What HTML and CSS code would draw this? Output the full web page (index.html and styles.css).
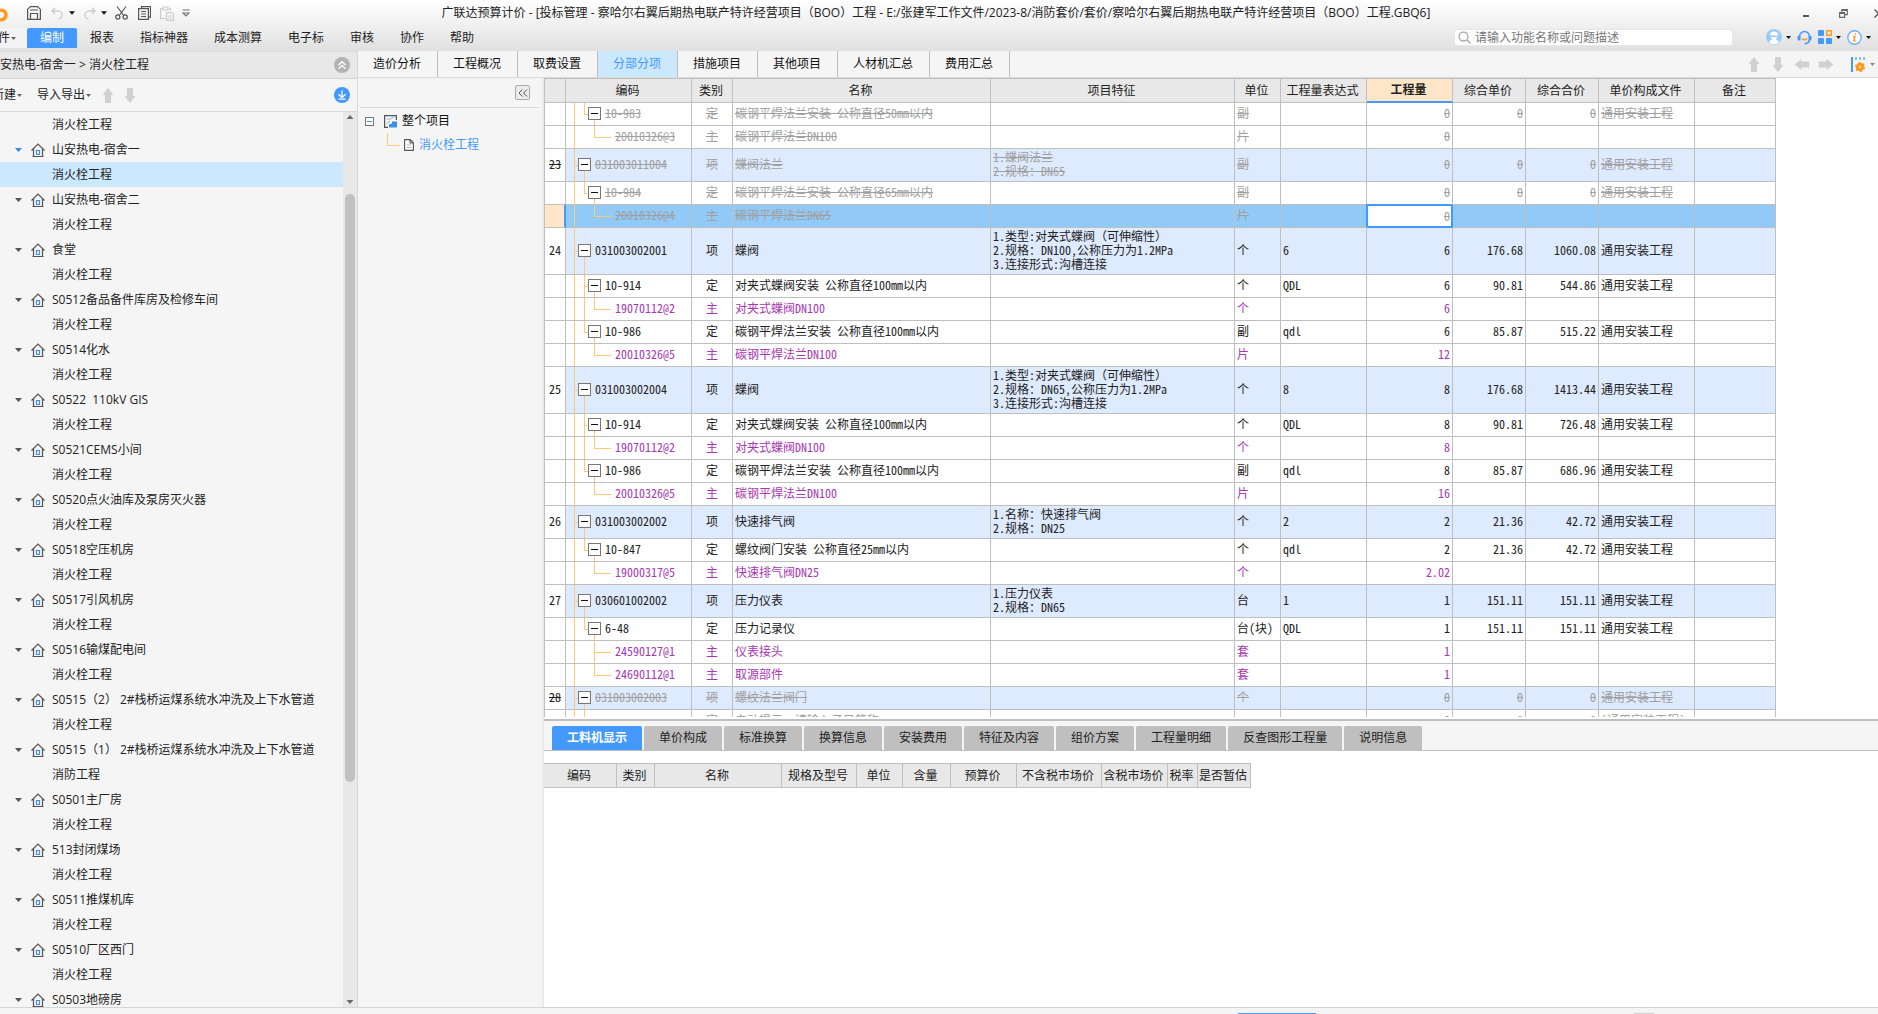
FILE: index.html
```
<!DOCTYPE html>
<html lang="zh-CN">
<head>
<meta charset="utf-8">
<title>广联达预算计价</title>
<link rel="stylesheet" href="styles.css">
</head>
<body>
<svg class="defs" aria-hidden="true">
  <symbol id="house" viewBox="0 0 14 14"><path d="M.5 7.5 7 1l6.500 6.500M2.500 6v7.500M11.500 6v7.500M1.500 13.500h11" fill="none" stroke="#555" stroke-width="1.200"/><path d="M5.500 7.500h3v4h-3z" fill="none" stroke="#3c8ee8" stroke-width="1.200"/></symbol>
  <symbol id="caret" viewBox="0 0 7 4"><path d="M0 0h7L3.500 4z" fill="currentColor"/></symbol>
  <symbol id="arrow" viewBox="0 0 12 15"><path d="M6 0l5.500 7H9v8H3V7H.5z" fill="currentColor"/></symbol>
</svg>

<header class="top">
  <div class="titlebar">
    <div class="quick">
      <svg class="logo" width="10" height="16" viewBox="0 0 10 16"><path d="M0 3.500a4.700 4.700 0 1 1 0 9" fill="none" stroke="#ff9a1f" stroke-width="3.500"/></svg>
      <button class="ib save" aria-label="保存"><svg width="14" height="14" viewBox="0 0 14 14"><path d="M.6 3.400 3.400.6h7.200l2.800 2.800v10H.6zM3 4h8M3.500 13V7.500h7V13" fill="none" stroke="#555" stroke-width="1.200"/></svg></button>
      <button class="ib undo" aria-label="撤销"><svg width="12" height="13" viewBox="0 0 12 13"><path d="M4 .8 1 4l3 3M1 4h5.500a4 4 0 0 1 1 8" fill="none" stroke="#ccc" stroke-width="1.300"/></svg></button>
      <svg class="car" width="6" height="4"><use href="#caret"/></svg>
      <button class="ib redo" aria-label="恢复"><svg width="12" height="13" viewBox="0 0 12 13"><path d="M8 .8 11 4 8 7M11 4H5.500a4 4 0 0 0-1 8" fill="none" stroke="#ccc" stroke-width="1.300"/></svg></button>
      <svg class="car" width="6" height="4"><use href="#caret"/></svg>
      <button class="ib cut" aria-label="剪切"><svg width="13" height="14" viewBox="0 0 13 14"><path d="M2 .5l6.800 9M11 .5l-6.800 9" fill="none" stroke="#555" stroke-width="1.200"/><circle cx="2.800" cy="11" r="2.100" fill="none" stroke="#555" stroke-width="1.200"/><circle cx="10.200" cy="11" r="2.100" fill="none" stroke="#555" stroke-width="1.200"/></svg></button>
      <button class="ib copy" aria-label="复制"><svg width="13" height="14" viewBox="0 0 13 14"><path d="M3.500 2.500V.6h9v10.500h-2M.6 2.600h9.800v10.800H.6zM3 5.500h5M3 8h5M3 10.500h5" fill="none" stroke="#555" stroke-width="1.200"/></svg></button>
      <button class="ib paste" aria-label="粘贴"><svg width="14" height="15" viewBox="0 0 14 15"><path d="M7 12.500H.6v-10H3M9 2.500h1.500V5M3 1h5v3H3zM6.600 6.600h5l1.800 1.800v6H6.600zM8.500 10h3M8.500 12h3" fill="none" stroke="#ccc" stroke-width="1.200"/></svg></button>
      <button class="ib more" aria-label="自定义"><svg width="8" height="8" viewBox="0 0 8 8"><path d="M.5 1h7M1 4l3 3 3-3z" fill="none" stroke="#777" stroke-width="1.200"/></svg></button>
    </div>
    <h1>广联达预算计价 - [投标管理 - 察哈尔右翼后期热电联产特许经营项目（BOO）工程 - E:/张建军工作文件/2023-8/消防套价/套价/察哈尔右翼后期热电联产特许经营项目（BOO）工程.GBQ6]</h1>
    <div class="winctl">
      <button class="ib" aria-label="最小化"><svg width="12" height="12" viewBox="0 0 12 12"><path d="M2 9h6" stroke="#555" stroke-width="2"/></svg></button>
      <button class="ib" aria-label="还原"><svg width="9" height="9" viewBox="0 0 9 9"><path d="M.6 3.600h5v4.800h-5zM2.800 3.500V.6h5.500v5H6M.6 4.500h5M3 1.500h5" fill="none" stroke="#666" stroke-width="1.100"/></svg></button>
      <button class="ib close" aria-label="关闭"><svg width="9" height="9" viewBox="0 0 9 9"><path d="M.5.5l8 8M8.500.5l-8 8" stroke="#555" stroke-width="1.300"/></svg></button>
    </div>
  </div>
  <div class="menubar">
    <nav>
      <button class="file">文件<svg width="5" height="3"><use href="#caret"/></svg></button>
      <button class="on">编制</button><button>报表</button><button>指标神器</button><button>成本测算</button><button>电子标</button><button>审核</button><button>协作</button><button>帮助</button>
    </nav>
    <label class="search">
      <svg width="13" height="13" viewBox="0 0 13 13"><circle cx="5.500" cy="5.500" r="4.500" fill="none" stroke="#aaa" stroke-width="1.300"/><path d="M9 9l3.500 3.500" stroke="#aaa" stroke-width="1.500"/></svg>
      <input type="text" placeholder="请输入功能名称或问题描述" aria-label="搜索功能">
    </label>
    <div class="account">
      <button class="ib" aria-label="用户"><svg width="16" height="16" viewBox="0 0 16 16"><circle cx="8" cy="8" r="8" fill="#9ccbf8"/><path d="M4 6.500a4 4 0 0 1 8 0zM5 8h6a3 3 0 0 1-1.500 2.600c2 .5 3 1.500 3.500 2.900a8 8 0 0 1-10 0c.5-1.400 1.500-2.400 3.500-2.900A3 3 0 0 1 5 8z" fill="#fff"/></svg></button>
      <svg class="car" width="5" height="3"><use href="#caret"/></svg>
      <button class="ib" aria-label="客服"><svg width="15" height="15" viewBox="0 0 15 15"><path d="M2.500 7V6.500a5 5 0 0 1 10 0V7M12.500 9.500c0 2.500-2 4-5 4.300" fill="none" stroke="#49f" stroke-width="1.600"/><path d="M.5 6h3v4.500H2A1.500 1.500 0 0 1 .5 9zM11.500 6h3V9a1.500 1.500 0 0 1-1.500 1.500h-1.500z" fill="#49f"/><path d="M5 8.500q2.500 2.500 5 0" fill="none" stroke="#ff9a1f" stroke-width="1.500"/></svg></button>
      <button class="ib" aria-label="应用"><svg width="14" height="14" viewBox="0 0 14 14"><rect width="6" height="6" rx="1" fill="#49f"/><rect y="8" width="6" height="6" rx="1" fill="#49f"/><rect x="8" y="8" width="6" height="6" rx="1" fill="#49f"/><path d="M8.800.8h4.400v4.400H8.800z" fill="none" stroke="#ff9a1f" stroke-width="1.500"/></svg></button>
      <svg class="car" width="5" height="3"><use href="#caret"/></svg>
      <button class="ib" aria-label="关于"><svg width="15" height="15" viewBox="0 0 15 15"><circle cx="7.500" cy="7.500" r="6.700" fill="#fff" stroke="#6fb1fb" stroke-width="1.400"/><path d="M8.500 3.200v1.600M6 6.500h1.800L7 11h1.500" fill="none" stroke="#ff9a1f" stroke-width="1.500"/></svg></button>
      <svg class="car" width="5" height="3"><use href="#caret"/></svg>
    </div>
  </div>
</header>

<div class="body">
  <aside class="projects">
    <div class="crumb"><span class="path">山安热电-宿舍一 &gt; 消火栓工程</span>
      <button class="ib" aria-label="收起"><svg width="16" height="16" viewBox="0 0 16 16"><circle cx="8" cy="8" r="8" fill="#b3b3b3"/><path d="M4.500 8 8 4.700 11.500 8M4.500 11.700 8 8.400l3.500 3.300" fill="none" stroke="#fff" stroke-width="1.300"/></svg></button></div>
    <div class="tools">
      <button class="txt new">新建<svg width="5" height="3"><use href="#caret"/></svg></button>
      <button class="txt imp">导入导出<svg width="5" height="3"><use href="#caret"/></svg></button>
      <button class="ib dim" aria-label="上移"><svg width="12" height="15"><use href="#arrow"/></svg></button>
      <button class="ib dim down" aria-label="下移"><svg width="12" height="15"><use href="#arrow"/></svg></button>
      <button class="ib dl" aria-label="下载"><svg width="16" height="16" viewBox="0 0 16 16"><circle cx="8" cy="8" r="8" fill="#49f"/><path d="M8 3.500v7M4.500 7.200 8 10.600l3.500-3.400M4.500 12.200h7" fill="none" stroke="#fff" stroke-width="1.300"/></svg></button>
    </div>
    <div class="treewrap">
      <ul class="tree">
        <li class="leaf">消火栓工程</li>
        <li class="cur"><svg class="tw" width="7" height="4"><use href="#caret"/></svg><svg class="hs" width="14" height="14"><use href="#house"/></svg>山安热电-宿舍一</li>
        <li class="leaf sel">消火栓工程</li>
        <li><svg class="tw" width="7" height="4"><use href="#caret"/></svg><svg class="hs" width="14" height="14"><use href="#house"/></svg>山安热电-宿舍二</li>
        <li class="leaf">消火栓工程</li>
        <li><svg class="tw" width="7" height="4"><use href="#caret"/></svg><svg class="hs" width="14" height="14"><use href="#house"/></svg>食堂</li>
        <li class="leaf">消火栓工程</li>
        <li><svg class="tw" width="7" height="4"><use href="#caret"/></svg><svg class="hs" width="14" height="14"><use href="#house"/></svg>S0512备品备件库房及检修车间</li>
        <li class="leaf">消火栓工程</li>
        <li><svg class="tw" width="7" height="4"><use href="#caret"/></svg><svg class="hs" width="14" height="14"><use href="#house"/></svg>S0514化水</li>
        <li class="leaf">消火栓工程</li>
        <li><svg class="tw" width="7" height="4"><use href="#caret"/></svg><svg class="hs" width="14" height="14"><use href="#house"/></svg>S0522&nbsp; 110kV GIS</li>
        <li class="leaf">消火栓工程</li>
        <li><svg class="tw" width="7" height="4"><use href="#caret"/></svg><svg class="hs" width="14" height="14"><use href="#house"/></svg>S0521CEMS小间</li>
        <li class="leaf">消火栓工程</li>
        <li><svg class="tw" width="7" height="4"><use href="#caret"/></svg><svg class="hs" width="14" height="14"><use href="#house"/></svg>S0520点火油库及泵房灭火器</li>
        <li class="leaf">消火栓工程</li>
        <li><svg class="tw" width="7" height="4"><use href="#caret"/></svg><svg class="hs" width="14" height="14"><use href="#house"/></svg>S0518空压机房</li>
        <li class="leaf">消火栓工程</li>
        <li><svg class="tw" width="7" height="4"><use href="#caret"/></svg><svg class="hs" width="14" height="14"><use href="#house"/></svg>S0517引风机房</li>
        <li class="leaf">消火栓工程</li>
        <li><svg class="tw" width="7" height="4"><use href="#caret"/></svg><svg class="hs" width="14" height="14"><use href="#house"/></svg>S0516输煤配电间</li>
        <li class="leaf">消火栓工程</li>
        <li><svg class="tw" width="7" height="4"><use href="#caret"/></svg><svg class="hs" width="14" height="14"><use href="#house"/></svg>S0515（2） 2#栈桥运煤系统水冲洗及上下水管道</li>
        <li class="leaf">消火栓工程</li>
        <li><svg class="tw" width="7" height="4"><use href="#caret"/></svg><svg class="hs" width="14" height="14"><use href="#house"/></svg>S0515（1） 2#栈桥运煤系统水冲洗及上下水管道</li>
        <li class="leaf">消防工程</li>
        <li><svg class="tw" width="7" height="4"><use href="#caret"/></svg><svg class="hs" width="14" height="14"><use href="#house"/></svg>S0501主厂房</li>
        <li class="leaf">消火栓工程</li>
        <li><svg class="tw" width="7" height="4"><use href="#caret"/></svg><svg class="hs" width="14" height="14"><use href="#house"/></svg>513封闭煤场</li>
        <li class="leaf">消火栓工程</li>
        <li><svg class="tw" width="7" height="4"><use href="#caret"/></svg><svg class="hs" width="14" height="14"><use href="#house"/></svg>S0511推煤机库</li>
        <li class="leaf">消火栓工程</li>
        <li><svg class="tw" width="7" height="4"><use href="#caret"/></svg><svg class="hs" width="14" height="14"><use href="#house"/></svg>S0510厂区西门</li>
        <li class="leaf">消火栓工程</li>
        <li><svg class="tw" width="7" height="4"><use href="#caret"/></svg><svg class="hs" width="14" height="14"><use href="#house"/></svg>S0503地磅房</li>
      </ul>
      <div class="scroll">
        <svg class="up" width="8" height="4"><use href="#caret"/></svg>
        <div class="track"><div class="thumb"></div></div>
        <svg width="8" height="4"><use href="#caret"/></svg>
      </div>
    </div>
  </aside>

  <div class="work">
    <div class="tabs">
      <nav><button>造价分析</button><button>工程概况</button><button>取费设置</button><button class="on">分部分项</button><button>措施项目</button><button>其他项目</button><button>人材机汇总</button><button>费用汇总</button></nav>
      <div class="moves">
        <button class="ib dim" aria-label="上移"><svg width="12" height="15"><use href="#arrow"/></svg></button>
        <button class="ib dim down" aria-label="下移"><svg width="12" height="15"><use href="#arrow"/></svg></button>
        <button class="ib dim left" aria-label="升级"><svg width="12" height="15"><use href="#arrow"/></svg></button>
        <button class="ib dim right" aria-label="降级"><svg width="12" height="15"><use href="#arrow"/></svg></button>
        <button class="ib gear" aria-label="设置"><svg width="14" height="15" viewBox="0 0 14 15"><path d="M1 0v15" stroke="#49f" stroke-width="2"/><path d="M5 0v3M9 0v3M13 0v3" stroke="#49f" stroke-width="1.200"/><circle cx="9" cy="10" r="2.700" fill="none" stroke="#ff9a1f" stroke-width="3.200"/><circle cx="9" cy="10" r="4.300" fill="none" stroke="#ff9a1f" stroke-width="1.400" stroke-dasharray="2.250"/></svg></button>
        <svg class="gray" width="5" height="3"><use href="#caret"/></svg>
      </div>
    </div>
    <div class="panes">
      <aside class="section">
        <div class="sectop"><button class="fold2" aria-label="收起"><svg width="10" height="8" viewBox="0 0 10 8"><path d="M4.500.5 1 4l3.500 3.500M9 .5 5.500 4 9 7.500" fill="none" stroke="#555"/></svg></button></div>
        <ul>
          <li><button class="mini" aria-label="折叠"></button><svg width="13" height="13" viewBox="0 0 13 13"><path d="M12.400 5V.6H.6v11.800H4" fill="none" stroke="#555" stroke-width="1.200"/><path d="M2.500 4h4l4-2.500M2.500 9 6 6" fill="none" stroke="#7db8f7"/><path d="M5 12.500V9.500l3-1V6.500h5v6z" fill="#3c8ee8"/></svg>整个项目</li>
          <li class="sub"><svg width="10" height="12" viewBox="0 0 10 12"><path d="M.6.6h5.600l3.200 3.200v7.600H.6zM6 .6V4h3.400" fill="#fff" stroke="#555" stroke-width="1.100"/><path d="M2.500 6h5M2.500 8.500h5" stroke="#bbb"/></svg><a href="#">消火栓工程</a></li>
        </ul>
      </aside>
      <main>
        <div class="gridpane">
          <table class="grid">
            <colgroup><col class="c21"><col class="c126"><col class="c41"><col class="c258"><col class="c244"><col class="c46"><col class="c86"><col class="c86"><col class="c73"><col class="c73"><col class="c96"><col class="c81"></colgroup>
            <thead><tr><th><th>编码<th>类别<th>名称<th>项目特征<th>单位<th>工程量表达式<th class="act">工程量<th>综合单价<th>综合合价<th>单价构成文件<th>备注</thead>
            <tbody>
            <tr class="del"><td><td class="code norm last"><div><button class="fold" aria-label="折叠"></button><span>10-983</span></div><td>定<td>碳钢平焊法兰安装 公称直径50mm以内<td><td>副<td><td>0<td>0<td>0<td>通用安装工程<td>
            <tr class="del"><td><td class="code mat last"><div><span>20010326@3</span></div><td>主<td>碳钢平焊法兰DN100<td><td>片<td><td>0<td><td><td><td>
            <tr class="del it"><td>23<td class="code item"><div><button class="fold" aria-label="折叠"></button><span>031003011004</span></div><td>项<td>蝶阀法兰<td>1.蝶阀法兰<br>2.规格：DN65<td>副<td><td>0<td>0<td>0<td>通用安装工程<td>
            <tr class="del"><td><td class="code norm last"><div><button class="fold" aria-label="折叠"></button><span>10-984</span></div><td>定<td>碳钢平焊法兰安装 公称直径65mm以内<td><td>副<td><td>0<td>0<td>0<td>通用安装工程<td>
            <tr class="del picked"><td><td class="code mat last"><div><span>20010326@4</span></div><td>主<td>碳钢平焊法兰DN65<td><td>片<td><td class="edit"><input type="text" value="0" aria-label="工程量"><td><td><td><td>
            <tr class="it"><td>24<td class="code item"><div><button class="fold" aria-label="折叠"></button><span>031003002001</span></div><td>项<td>蝶阀<td>1.类型:对夹式蝶阀<span class="fw">（</span>可伸缩性<span class="fw">）</span><br>2.规格：DN100,公称压力为1.2MPa<br>3.连接形式:沟槽连接<td>个<td>6<td>6<td>176.68<td>1060.08<td>通用安装工程<td>
            <tr><td><td class="code norm"><div><button class="fold" aria-label="折叠"></button><span>10-914</span></div><td>定<td>对夹式蝶阀安装 公称直径100mm以内<td><td>个<td>QDL<td>6<td>90.81<td>544.86<td>通用安装工程<td>
            <tr class="m"><td><td class="code mat last open"><div><span>19070112@2</span></div><td>主<td>对夹式蝶阀DN100<td><td>个<td><td>6<td><td><td><td>
            <tr><td><td class="code norm last"><div><button class="fold" aria-label="折叠"></button><span>10-986</span></div><td>定<td>碳钢平焊法兰安装 公称直径100mm以内<td><td>副<td>qdl<td>6<td>85.87<td>515.22<td>通用安装工程<td>
            <tr class="m"><td><td class="code mat last"><div><span>20010326@5</span></div><td>主<td>碳钢平焊法兰DN100<td><td>片<td><td>12<td><td><td><td>
            <tr class="it"><td>25<td class="code item"><div><button class="fold" aria-label="折叠"></button><span>031003002004</span></div><td>项<td>蝶阀<td>1.类型:对夹式蝶阀<span class="fw">（</span>可伸缩性<span class="fw">）</span><br>2.规格：DN65,公称压力为1.2MPa<br>3.连接形式:沟槽连接<td>个<td>8<td>8<td>176.68<td>1413.44<td>通用安装工程<td>
            <tr><td><td class="code norm"><div><button class="fold" aria-label="折叠"></button><span>10-914</span></div><td>定<td>对夹式蝶阀安装 公称直径100mm以内<td><td>个<td>QDL<td>8<td>90.81<td>726.48<td>通用安装工程<td>
            <tr class="m"><td><td class="code mat last open"><div><span>19070112@2</span></div><td>主<td>对夹式蝶阀DN100<td><td>个<td><td>8<td><td><td><td>
            <tr><td><td class="code norm last"><div><button class="fold" aria-label="折叠"></button><span>10-986</span></div><td>定<td>碳钢平焊法兰安装 公称直径100mm以内<td><td>副<td>qdl<td>8<td>85.87<td>686.96<td>通用安装工程<td>
            <tr class="m"><td><td class="code mat last"><div><span>20010326@5</span></div><td>主<td>碳钢平焊法兰DN100<td><td>片<td><td>16<td><td><td><td>
            <tr class="it"><td>26<td class="code item"><div><button class="fold" aria-label="折叠"></button><span>031003002002</span></div><td>项<td>快速排气阀<td>1.名称：快速排气阀<br>2.规格：DN25<td>个<td>2<td>2<td>21.36<td>42.72<td>通用安装工程<td>
            <tr><td><td class="code norm last"><div><button class="fold" aria-label="折叠"></button><span>10-847</span></div><td>定<td>螺纹阀门安装 公称直径25mm以内<td><td>个<td>qdl<td>2<td>21.36<td>42.72<td>通用安装工程<td>
            <tr class="m"><td><td class="code mat last"><div><span>19000317@5</span></div><td>主<td>快速排气阀DN25<td><td>个<td><td>2.02<td><td><td><td>
            <tr class="it"><td>27<td class="code item"><div><button class="fold" aria-label="折叠"></button><span>030601002002</span></div><td>项<td>压力仪表<td>1.压力仪表<br>2.规格：DN65<td>台<td>1<td>1<td>151.11<td>151.11<td>通用安装工程<td>
            <tr><td><td class="code norm last"><div><button class="fold" aria-label="折叠"></button><span>6-48</span></div><td>定<td>压力记录仪<td><td>台(块)<td>QDL<td>1<td>151.11<td>151.11<td>通用安装工程<td>
            <tr class="m"><td><td class="code mat"><div><span>24590127@1</span></div><td>主<td>仪表接头<td><td>套<td><td>1<td><td><td><td>
            <tr class="m"><td><td class="code mat last"><div><span>24690112@1</span></div><td>主<td>取源部件<td><td>套<td><td>1<td><td><td><td>
            <tr class="del it"><td>28<td class="code item"><div><button class="fold" aria-label="折叠"></button><span>031003002003</span></div><td>项<td>螺纹法兰阀门<td><td>个<td><td>0<td>0<td>0<td>通用安装工程<td>
            <tr class="del"><td><td class="code norm last"><div></div><td>定<td>自动提示：请输入子目简称<td><td><td><td>0<td>0<td>0<td>[通用安装工程]<td>
            </tbody>
          </table>
        </div>
        <div class="detail">
          <nav><button class="on">工料机显示</button><button>单价构成</button><button>标准换算</button><button>换算信息</button><button>安装费用</button><button>特征及内容</button><button>组价方案</button><button>工程量明细</button><button>反查图形工程量</button><button>说明信息</button></nav>
          <table class="grid res">
            <colgroup><col class="c73"><col class="c38"><col class="c127"><col class="c75"><col class="c46"><col class="c48"><col class="c66"><col class="c85"><col class="c66"><col class="c30"><col class="c53"></colgroup>
            <thead><tr><th>编码<th>类别<th>名称<th>规格及型号<th>单位<th>含量<th>预算价<th>不含税市场价<th>含税市场价<th>税率<th>是否暂估</thead>
          </table>
        </div>
      </main>
    </div>
  </div>
</div>
<footer><span class="view"></span><span class="zoom"></span></footer>
</body>
</html>
```
FILE: styles.css
```
* { box-sizing: border-box; }
body { margin: 0; height: 100vh; display: flex; flex-direction: column; overflow: hidden; background: #f5f5f5; color: #222; font: 12px/16px "Open Sans", "Noto Sans CJK SC", sans-serif; }
button { font: inherit; color: inherit; border: 0; background: none; padding: 0; margin: 0; white-space: nowrap; }
svg { display: block; flex: none; }
ul { list-style: none; margin: 0; padding: 0; }
.defs { position: absolute; width: 0; height: 0; }
.ib { display: block; flex: none; }

/* title bar and menu */
.top { flex: none; height: 51px; background: linear-gradient(#fff, #e0e0e0); }
.titlebar { height: 28px; display: grid; grid-template-columns: 1fr auto 1fr; padding-bottom: 4px; }
.titlebar h1 { margin: 0; padding-right: 6px; font-size: 12px; font-weight: 400; line-height: 26px; white-space: nowrap; }
.quick { display: flex; align-items: center; }
.logo { margin-top: 4px; margin-right: 17px; }
.undo { margin: 0 6px 0 10px; }
.redo { margin: 0 5px 0 9px; }
.cut { margin-left: 8px; }
.copy { margin-left: 10px; }
.paste { margin-left: 9px; }
.more { margin-left: 8px; }
.car { color: #111; }
.winctl { display: flex; justify-content: flex-end; align-items: center; gap: 26px; margin-right: -5px; }
.menubar { height: 23px; display: flex; align-items: flex-start; }
.menubar nav { display: flex; flex: 1; }
.menubar nav button { height: 20px; padding: 0 13px; }
.menubar nav .on { background: #49f; color: #fff; border-radius: 2px 2px 0 0; }
.menubar nav .file, .txt { display: flex; align-items: center; gap: 1px; }
.menubar nav .file { width: 41px; margin-left: -14px; padding: 0; background: #f3f3f3; }
.file svg, .txt svg { color: #666; }
.search { width: 279px; height: 17px; margin-top: 1px; padding: 0 3px; display: flex; align-items: center; gap: 4px; background: #fff; border: 1px solid #e6e6e6; border-radius: 3px; }
.search input { flex: 1; min-width: 0; height: 15px; padding: 0; border: 0; outline: 0; background: none; font: inherit; line-height: 15px; }
.search input::placeholder { color: #777; opacity: 1; }
.account { display: flex; align-items: center; height: 18px; margin-left: 33px; padding-right: 7px; }
.account .car { margin-left: 4px; }
.account .ib + .ib, .account .car + .ib { margin-left: 6px; }

/* project tree */
.body { flex: 1; min-height: 0; display: flex; }
.projects { flex: none; width: 358px; display: flex; flex-direction: column; border-right: 1px solid #d9d9d9; }
.crumb { flex: none; height: 28px; display: flex; align-items: center; justify-content: space-between; padding-right: 7px; background: #e8e8e8; border-top: 1px solid #dcdcdc; border-bottom: 1px solid #d4d4d4; }
.path { margin-left: -12px; }
.tools { flex: none; height: 33px; display: flex; align-items: center; padding-right: 7px; border-bottom: 1px solid #d9d9d9; }
.new { margin-left: -8px; }
.imp { margin: 0 11px 0 15px; }
.dim { color: #d0d0d0; }
.tools .down { margin-left: 10px; }
.down svg { transform: rotate(180deg); }
.left svg { transform: rotate(-90deg); }
.right svg { transform: rotate(90deg); }
.dl { margin-left: auto; }
.treewrap { flex: 1; min-height: 0; display: flex; }
.tree { flex: 1; overflow: hidden; }
.tree li { height: 25px; display: flex; align-items: center; padding-left: 15px; white-space: nowrap; }
.tree .leaf { padding-left: 52px; }
.tree .sel { background: #cce8ff; }
.tw { color: #555; }
.cur .tw { color: #2f8dee; }
.hs { margin: 0 7px 0 9px; }
.scroll { width: 14px; display: flex; flex-direction: column; align-items: center; padding: 3px 0; background: #e8e8e8; color: #666b75; }
.scroll .up { transform: rotate(180deg); }
.track { flex: 1; width: 10px; padding: 75px 0 0; }
.thumb { height: 73%; border-radius: 5px; background: #c1c1c1; }

/* work area */
.work { flex: 1; min-width: 0; display: flex; flex-direction: column; }
.tabs { flex: none; height: 27px; display: flex; justify-content: space-between; border-bottom: 1px solid #d9d9d9; }
.tabs nav { display: flex; }
.tabs nav button { padding: 0 16px 0 15px; border-right: 1px solid #bfbfbf; color: #111; }
.tabs nav .on { background: #cce8ff; color: #49f; }
.moves { display: flex; align-items: center; gap: 12px; padding-right: 3px; }
.gear { margin-left: 7px; }
.gray { color: #888; margin-left: -7px; }
.panes { flex: 1; min-height: 0; display: flex; }
.section { flex: none; width: 186px; border-right: 2px solid #ebebeb; }
.sectop { height: 30px; margin: 0 3px 0 2px; padding: 7px 9px 0 0; border-bottom: 1px solid #d9d9d9; }
.fold2 { display: flex; align-items: center; justify-content: center; width: 15px; height: 15px; margin-left: auto; border: 1px solid #aaa; border-radius: 2px; background: #ececec; }
.section li { height: 24px; display: flex; align-items: center; padding-left: 7px; color: #111; }
.section ul { padding-top: 1px; }
.section li svg { margin-right: 5px; }
.section .sub { padding-left: 46px; background: linear-gradient(#ffc87a, #ffc87a) 29px 0 / 1px 12px no-repeat, linear-gradient(#ffc87a, #ffc87a) 29px 12px / 13px 1px no-repeat; }
.section a { color: #49f; text-decoration: none; }
.mini { width: 9px; height: 9px; margin-right: 10px; border: 1px solid #777; background: linear-gradient(#1ba8dd, #1ba8dd) center / 5px 1px no-repeat #fff; }
main { flex: 1; min-width: 0; display: grid; grid-template-rows: 641fr 288fr; background: #fff; }
.gridpane { min-height: 0; overflow: hidden; border-bottom: 2px solid #fff; }

.grid { table-layout: fixed; width: 1232px; border-collapse: separate; border-spacing: 0; border-left: 1px solid #bfbfbf; border-top: 1px solid #bfbfbf; font-family: "Noto Sans CJK SC", sans-serif; line-height: 14px; font-feature-settings: "hwid"; }
.c21 { width: 21px; } .c30 { width: 30px; } .c38 { width: 38px; } .c41 { width: 41px; } .c46 { width: 46px; } .c48 { width: 48px; } .c53 { width: 53px; } .c66 { width: 66px; } .c73 { width: 73px; } .c75 { width: 75px; } .c81 { width: 81px; } .c85 { width: 85px; } .c86 { width: 86px; } .c96 { width: 96px; } .c126 { width: 126px; } .c127 { width: 127px; } .c244 { width: 244px; } .c258 { width: 258px; }
.grid th { height: 24px; padding: 0 2px 2px 0; font-weight: 400; text-align: center; background: #e8e8e8; border-right: 1px solid #bfbfbf; border-bottom: 1px solid #bfbfbf; white-space: nowrap; }
.grid .act { font-weight: 700; background: #ffe6c8; border-bottom: 2px solid #49f; }
.grid td { height: 23px; padding: 1px 2px 3px; border-right: 1px solid #bfbfbf; border-bottom: 1px solid #bfbfbf; white-space: nowrap; }
.grid td:nth-child(1), .grid td:nth-child(3) { text-align: center; }
.grid td:nth-child(8), .grid td:nth-child(9), .grid td:nth-child(10) { text-align: right; }
.fw { font-feature-settings: normal; }
.it td:not(:first-child) { background-color: #deeafe; }
.m { color: #a837b0; }
.del { color: #a0a0a0; }
.del td:not(.code), .del .code span, .del input { text-decoration: line-through; }
.del td:first-child, .grid td:first-child { color: #222; }
.picked td { background-color: #91c9f7; }
.picked td:first-child { background: #ffe6c8; border-right: 2px solid #49f; }
.grid .edit { padding: 0; background: #fff; box-shadow: -1px -1px 0 #49f, inset 0 0 0 1px #49f; border-color: #49f; }
.edit input { display: block; width: 100%; height: 20px; padding: 0 2px 2px; border: 0; outline: 0; background: none; color: inherit; font: inherit; font-feature-settings: inherit; text-align: right; }

/* connector lines of the code column */
.grid .code { padding: 0 0 2px; --o: linear-gradient(#ffc87a, #ffc87a); background-repeat: no-repeat; }
.code div { display: flex; align-items: center; gap: 4px; }
.item div { padding-left: 12px; }
.norm div { padding-left: 22px; }
.mat div { padding-left: 49px; }
.item { background-image: var(--o), var(--o), var(--o); background-size: 1px 100%, 4px 1px, 1px 50%; background-position: 8px 0, 8px 50%, 18px 100%; }
.norm { background-image: var(--o), var(--o), var(--o), var(--o); background-size: 1px 100%, 4px 1px, 1px 50%, 1px 100%; background-position: 8px 0, 18px 50%, 28px 100%, 18px 0; }
.norm.last { background-size: 1px 100%, 4px 1px, 1px 50%, 1px 50%; }
.mat { background-image: var(--o), var(--o), var(--o); background-size: 1px 100%, 17px 1px, 1px 100%; background-position: 8px 0, 28px 50%, 28px 0; }
.mat.last { background-size: 1px 100%, 17px 1px, 1px 50%; }
.mat.open { background-image: var(--o), var(--o), var(--o), var(--o); background-size: 1px 100%, 17px 1px, 1px 50%, 1px 100%; background-position: 8px 0, 28px 50%, 28px 0, 18px 0; }
.fold { flex: none; width: 13px; height: 13px; border: 1px solid #777; background: linear-gradient(#111, #111) center / 7px 1px no-repeat #fff; }

/* detail pane */
.detail { min-height: 0; border-top: 2px solid #bfbfbf; }
.detail nav { display: flex; gap: 2px; height: 30px; padding: 5px 0 0 8px; background: #f5f5f5; border-bottom: 1px solid #bfbfbf; }
.detail nav button { padding: 0 15px; background: #bfbfbf; border-radius: 2px 2px 0 0; }
.detail nav .on { background: #49f; color: #fff; font-weight: 700; }
.res { width: 707px; margin-top: 12px; border-left: 0; }

footer { flex: none; height: 7px; display: flex; justify-content: flex-end; align-items: flex-end; padding-right: 224px; border-top: 1px solid #d4d4d4; }
.view { width: 78px; height: 1px; margin-right: 318px; background: #49f; }
.zoom { width: 20px; height: 1px; background: #ccc; }
```
